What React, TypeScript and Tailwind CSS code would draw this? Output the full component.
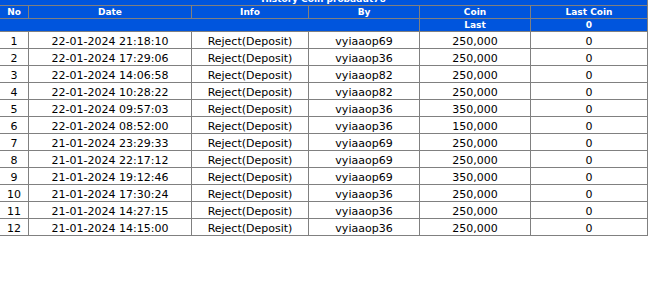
const rows = [
  { no: 1, date: '22-01-2024 21:18:10', by: 'vyiaaop69', coin: '250,000' },
  { no: 2, date: '22-01-2024 17:29:06', by: 'vyiaaop36', coin: '250,000' },
  { no: 3, date: '22-01-2024 14:06:58', by: 'vyiaaop82', coin: '250,000' },
  { no: 4, date: '22-01-2024 10:28:22', by: 'vyiaaop82', coin: '250,000' },
  { no: 5, date: '22-01-2024 09:57:03', by: 'vyiaaop36', coin: '350,000' },
  { no: 6, date: '22-01-2024 08:52:00', by: 'vyiaaop36', coin: '150,000' },
  { no: 7, date: '21-01-2024 23:29:33', by: 'vyiaaop69', coin: '250,000' },
  { no: 8, date: '21-01-2024 22:17:12', by: 'vyiaaop69', coin: '250,000' },
  { no: 9, date: '21-01-2024 19:12:46', by: 'vyiaaop69', coin: '350,000' },
  { no: 10, date: '21-01-2024 17:30:24', by: 'vyiaaop36', coin: '250,000' },
  { no: 11, date: '21-01-2024 14:27:15', by: 'vyiaaop36', coin: '250,000' },
  { no: 12, date: '21-01-2024 14:15:00', by: 'vyiaaop36', coin: '250,000' },
];

const cols = 'grid grid-cols-[29px_163px_117px_111px_111px_117px]';
const head = 'h-[13px] border-b border-r border-[#808080] text-center text-[9px] leading-[13px] font-bold text-white';
const cell = 'h-[17px] border-b border-r border-[#808080] text-center text-[11px] leading-[17px] pt-px text-black';

export default function App() {
  return (
    <div className="h-[282px] w-[655px] overflow-hidden bg-white font-['DejaVu_Sans',sans-serif]">
      <div className="-mt-[7px] w-[648px]">
        <div className="bg-[#0055dd]">
          <div className={`${head} border-r`}>History Coin probadut76</div>
          <div className={cols}>
            <div className={head}>No</div>
            <div className={head}>Date</div>
            <div className={head}>Info</div>
            <div className={head}>By</div>
            <div className={head}>Coin</div>
            <div className={head}>Last Coin</div>
          </div>
          <div className={cols}>
            <div className="col-span-4 h-[13px] border-b border-r border-[#0055dd] [border-bottom-color:#808080] [border-right-color:#808080]" />
            <div className={head}>Last</div>
            <div className={head}>0</div>
          </div>
        </div>
        {rows.map((r) => (
          <div key={r.no} className={cols}>
            <div className={cell}>{r.no}</div>
            <div className={cell}>{r.date}</div>
            <div className={cell}>Reject(Deposit)</div>
            <div className={cell}>{r.by}</div>
            <div className={cell}>{r.coin}</div>
            <div className={cell}>0</div>
          </div>
        ))}
      </div>
    </div>
  );
}
